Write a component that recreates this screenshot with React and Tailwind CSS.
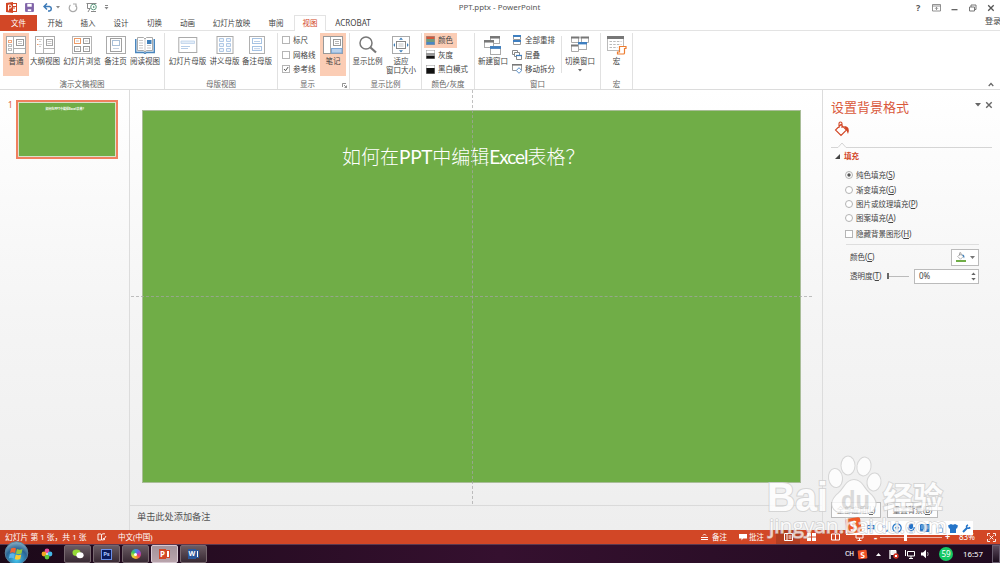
import React from "react";
import clsx from "clsx";

const TABS = [
  { label: "开始", width: "w-[36px]" },
  { label: "插入", width: "w-[30px]" },
  { label: "设计", width: "w-[36px]" },
  { label: "切换", width: "w-[31px]" },
  { label: "动画", width: "w-[35px]" },
  { label: "幻灯片放映", width: "w-[53px]" },
  { label: "审阅", width: "w-[36px]" },
];

const Icon = ({ w = 20, h = 18, className, children }) => (
  <svg width={w} height={h} viewBox={`0 0 ${w} ${h}`} fill="none" className={clsx("shrink-0", className)}>
    {children}
  </svg>
);

const NormalIcon = () => (
  <Icon>
    <rect x=".5" y=".5" width="19" height="17" fill="#fff" stroke="#a5a5a5" />
    <path d="M7.5 1v16M8 12.5h11" stroke="#b0b0b0" />
    <rect x="2.500" y="4.500" width="3" height="2" stroke="#f0a67c" />
    <rect x="2.500" y="8.500" width="3" height="2" stroke="#bbb" />
    <rect x="2.500" y="12.500" width="3" height="2" stroke="#bbb" />
    <rect x="10.500" y="3.500" width="7" height="6" stroke="#999" />
    <path d="M12 5.500h4M12 7.500h4" stroke="#aaa" strokeWidth=".7" />
  </Icon>
);

const OutlineIcon = () => (
  <Icon>
    <rect x=".5" y=".5" width="19" height="17" fill="#fff" stroke="#aaa" />
    <path d="M8.5 1v16M9 12.5h10" stroke="#b5b5b5" />
    <path d="M2 3.500h1.500M2 8.500h1.500" stroke="#ed9a66" />
    <path d="M4 3.500h3M4 5.500h2M4 8.500h3M4 10.500h2" stroke="#bbb" strokeWidth=".7" />
    <rect x="11.500" y="3.500" width="6" height="6" stroke="#a5a5a5" />
    <path d="M12.500 5.500h4M12.500 7.500h4" stroke="#aaa" strokeWidth=".7" />
  </Icon>
);

const SorterIcon = () => (
  <Icon>
    <rect x=".5" y=".5" width="19" height="17" fill="#fff" stroke="#b5b5b5" />
    <rect x="2.500" y="2.500" width="6" height="5" stroke="#ed9a66" />
    <rect x="11.500" y="2.500" width="6" height="5" stroke="#999" />
    <rect x="2.500" y="10.500" width="6" height="5" stroke="#999" />
    <rect x="11.500" y="10.500" width="6" height="5" stroke="#999" />
    <path d="M4 5h3M13 5h3M4 13h3M13 13h3" stroke="#aaa" strokeWidth=".7" />
  </Icon>
);

const NotesPageIcon = () => (
  <Icon>
    <rect x=".5" y=".5" width="19" height="17" fill="#fff" stroke="#aaa" />
    <rect x="4.500" y="2.500" width="11" height="13" stroke="#a0a0a0" />
    <rect x="6.500" y="4.500" width="7" height="5" stroke="#a9c0d8" />
    <path d="M7 12.500h6" stroke="#c5d3e2" />
  </Icon>
);

const ReadingIcon = () => (
  <Icon>
    <path d="M.7 3v13.500h7.800l1.500 1 1.500-1h7.800V3" fill="#dce9f5" stroke="#4a86bd" strokeWidth="1.400" />
    <path d="M2.500 1.500h6L10 3l1.500-1.500h6v13h-6L10 16l-1.500-1.500h-6z" fill="#fff" stroke="#aaa" />
    <path d="M10 3v12M4 4.500h4M4 7h4M4 9.500h4M4 12h4M12 9.500h4M12 12h4" stroke="#bbb" strokeWidth=".8" />
    <rect x="12" y="4" width="4.500" height="4" fill="#3f7fb9" />
  </Icon>
);

const SlideMasterIcon = () => (
  <Icon>
    <rect x=".8" y="1.500" width="18" height="15" fill="#fff" stroke="#aaa" />
    <path d="M3 5h13.500v2.500H3z" fill="#e3edf8" stroke="#bdd2ea" strokeWidth=".8" />
    <path d="M3 10.500h9M3 12.500h7" stroke="#b5cde8" />
  </Icon>
);

const HandoutIcon = () => (
  <Icon>
    <rect x="2" y=".5" width="16" height="17" fill="#fff" stroke="#aaa" />
    <path d="M4.500 2.500h4v3h-4zM11.500 2.500h4v3h-4zM4.500 7.500h4v3h-4zM11.500 7.500h4v3h-4zM4.500 12.500h4v3h-4zM11.500 12.500h4v3h-4z" fill="#eef4fb" stroke="#b0c9e6" />
  </Icon>
);

const NotesMasterIcon = () => (
  <Icon>
    <rect x="2.500" y=".5" width="15" height="17" fill="#fff" stroke="#b0b0b0" />
    <rect x="5.500" y="2.500" width="9" height="5" stroke="#a6c3e3" />
    <rect x="5.500" y="10.500" width="9" height="4" stroke="#a6c3e3" />
    <path d="M7 5.500h6M7 12.700h6" stroke="#a6c3e3" strokeWidth=".8" />
  </Icon>
);

const NotesIcon = () => (
  <Icon>
    <rect x=".5" y=".5" width="19" height="17" fill="#fff" stroke="#999" />
    <path d="M7.500 1v16" stroke="#aaa" />
    <rect x="10.500" y="3.500" width="7" height="6" stroke="#999" />
    <path d="M12 5.500h4M12 7.500h4" stroke="#999" strokeWidth=".7" />
    <rect x="8.500" y="12.500" width="10.500" height="4.500" fill="#b9d1ec" stroke="#7ea8d6" />
  </Icon>
);

const ZoomIcon = () => (
  <Icon>
    <circle cx="8" cy="7" r="6" stroke="#777" strokeWidth="1.500" />
    <path d="M12.500 11.500l5.500 5" stroke="#777" strokeWidth="2.200" />
  </Icon>
);

const FitIcon = () => (
  <Icon>
    <rect x="1.500" y=".5" width="17" height="17" fill="#fff" stroke="#aaa" />
    <rect x="5.500" y="5.500" width="9" height="7" stroke="#888" />
    <path d="M7.500 8h5M7.500 10h5" stroke="#aaa" strokeWidth=".7" />
    <path d="M10 1.500l2 2.300H8zM10 16.500l2-2.300H8zM2.300 9l1.700-2v4zM17.700 9L16 7v4z" fill="#3f7fb9" />
  </Icon>
);

const NewWindowIcon = () => (
  <Icon h={19}>
    <rect x="7.500" y=".5" width="9" height="7" fill="#fff" stroke="#aaa" />
    <path d="M7 1.300h10" stroke="#777" strokeWidth="2.500" />
    <rect x="1.500" y="4.500" width="9" height="7" fill="#fff" stroke="#aaa" />
    <path d="M1 5.300h10" stroke="#777" strokeWidth="2.500" />
    <rect x="7.500" y="10.500" width="10" height="8" fill="#fff" stroke="#aaa" />
    <path d="M7 11.500h11" stroke="#3f7fc0" strokeWidth="2.800" />
  </Icon>
);

const SwitchIcon = () => (
  <Icon>
    <path d="M1.500 1.500h7v5h-7zM11.500 1.500h7v5h-7zM1.500 9.500h7v6h-7z" fill="#fff" stroke="#aaa" />
    <path d="M1 1.500h8.500M10.500 1.500h8.500M1 9.500h7" stroke="#777" strokeWidth="2.200" />
    <rect x="8.500" y="6.500" width="8" height="7" fill="#fff" stroke="#aaa" />
    <path d="M8 7.200h9" stroke="#3f7fc0" strokeWidth="2.400" />
  </Icon>
);

const MacroIcon = () => (
  <Icon h={19}>
    <rect x=".5" y=".5" width="16" height="14" fill="#fff" stroke="#bbb" />
    <path d="M0 1.500h17" stroke="#777" strokeWidth="3" />
    <path d="M2.500 5.500h12M2.500 8.500h12M2.500 11.500h8" stroke="#bbb" strokeDasharray="2.500 1.200" />
    <path d="M12.500 10.500h6.500v2h-1.500v4.500q0 1-1 1h-6v-2h2z" fill="#fff" stroke="#ed7d31" strokeWidth="1.200" />
  </Icon>
);

const ArrangeIcon = () => (
  <Icon w={10} h={10}>
    <path d="M1.500 1h7v3.500h-7zM1.500 5.500h7V9.500h-7z" fill="#fff" stroke="#999" />
    <path d="M1 1h8M1 6h8" stroke="#3f7fc0" strokeWidth="1.800" />
  </Icon>
);

const CascadeIcon = () => (
  <Icon w={10} h={10}>
    <path d="M.5.5h5v4h-5z" fill="#fff" stroke="#888" />
    <path d="M2.500 2.500h5v4h-5z" fill="#fff" stroke="#888" />
    <path d="M4.500 5.500h5v4h-5z" fill="#fff" stroke="#888" />
    <path d="M4 5.500h6" stroke="#3f7fc0" strokeWidth="1.300" />
  </Icon>
);

const SplitIcon = () => (
  <Icon w={10} h={10}>
    <path d="M.5.5h9v6h-9z" fill="#fff" stroke="#999" />
    <path d="M0 .8h10" stroke="#777" strokeWidth="1.600" />
    <path d="M7 3.700L9.700 6.500 7 9.300 4.300 6.500z" fill="#fff" stroke="#5c92cb" />
  </Icon>
);

const PaletteIcon = ({ colors }) => (
  <Icon w={9} h={9}>
    {colors.map((c, i) => (
      <rect key={i} x="0" y={i * 3} width="9" height="3" fill={c} />
    ))}
    <rect x=".25" y=".25" width="8.500" height="8.500" stroke="#999" strokeWidth=".5" />
  </Icon>
);

const BigButton = ({ icon, label, width, active, children }) => (
  <div
    className={clsx(
      "flex h-[43px] shrink-0 flex-col items-center pt-[3px]",
      width,
      active && "bg-[#fbcdb5]"
    )}
  >
    <div className="h-[19px]">{icon}</div>
    <span className="mt-[2px] text-center leading-[9px] whitespace-nowrap">{label}</span>
    {children}
  </div>
);

const SmallRow = ({ icon, label, active, className }) => (
  <div className={clsx("flex h-[14.500px] items-center gap-[3px] whitespace-nowrap", active && "bg-[#fbcdb5]", className)}>
    {icon}
    <span>{label}</span>
  </div>
);

const Group = ({ title, width, pad, launcher, children }) => (
  <div className={clsx("flex shrink-0 flex-col border-r border-[#e1e1e1]", width)}>
    <div className={clsx("flex h-[46px]", pad)}>{children}</div>
    <div className="relative flex h-[10px] items-center justify-center text-[#666]">
      {title}
      {launcher && (
        <svg className="absolute right-[2px] bottom-[1px]" width="5" height="5" viewBox="0 0 5 5" fill="none" stroke="#777">
          <path d="M.5 4V.5H4M2 2l2.500 2.500M4.500 2.500v2h-2" strokeWidth=".8" />
        </svg>
      )}
    </div>
  </div>
);

const Check = ({ on }) => (
  <svg width="8" height="8" viewBox="0 0 8 8" fill="#fff" className="shrink-0">
    <rect x=".5" y=".5" width="7" height="7" stroke="#b5b5b5" />
    {on && <path d="M2 4l1.500 1.700L6.200 2" fill="none" stroke="#555" />}
  </svg>
);

const TitleBar = () => (
  <div className="flex h-[15px] shrink-0 items-center text-[#555]">
    <div className="flex w-[330px] items-center pl-[6px]">
      <svg width="11" height="11" viewBox="0 0 11 11">
        <rect x="5" y="1.500" width="5.500" height="8" fill="#fff" stroke="#d24726" />
        <path d="M8 4v3M7 4.500h3" stroke="#d24726" />
        <path d="M0 1l7-1v11l-7-1z" fill="#d24726" />
        <path d="M2.500 8.500V3h1.500a1.300 1.300 0 010 3H2.500" fill="none" stroke="#fff" />
      </svg>
      <svg className="ml-[8px]" width="9" height="9" viewBox="0 0 9 9" fill="none" stroke="#8064a8">
        <path d="M.6.6h7.800v7.800H.6z" fill="#8064a8" />
        <path d="M2 .5h5v3.500H2zM2.500 6h4v2.500h-4z" fill="#fff" strokeWidth=".6" />
      </svg>
      <svg className="ml-[9px]" width="10" height="9" viewBox="0 0 10 9" fill="none" stroke="#3c7ab8" strokeWidth="1.500">
        <path d="M1 3.500h5.500a2.300 2.300 0 010 4.500H5M4 .5l-3 3 3 3" />
      </svg>
      <svg className="ml-[3px]" width="4" height="3" viewBox="0 0 4 3"><path d="M0 0h4L2 2.500z" fill="#888" /></svg>
      <svg className="ml-[8px]" width="10" height="10" viewBox="0 0 10 10" fill="none" stroke="#aaa" strokeWidth="1.200">
        <path d="M2.500 2a3.800 3.800 0 105 0M5 1h3v3" />
      </svg>
      <svg className="ml-[8px]" width="12" height="11" viewBox="0 0 12 11" fill="none" stroke="#888">
        <path d="M.5 1.500h10M1.500 1.500v5h3M4 6.500L2 10M5 9.500h5" />
        <circle cx="7.500" cy="5" r="2.800" fill="#fff" stroke="#5d9b80" />
        <path d="M7 3.700v2.600L9 5z" fill="#5d9b80" stroke="none" />
      </svg>
      <svg className="ml-[6px]" width="5" height="5" viewBox="0 0 5 5"><path d="M1 0h3v1H1zM.500 2h4l-2 2.500z" fill="#888" /></svg>
    </div>
    <div className="-mt-[1px] w-[339px] text-center text-[7.900px]">PPT.pptx - PowerPoint</div>
    <div className="flex flex-1 items-center justify-end gap-[10px] pr-[5px]">
      <span className="w-[6px] text-[9px] font-bold">?</span>
      <svg width="9" height="8" viewBox="0 0 9 8" fill="none" stroke="#777">
        <path d="M.5.5h8v6.500h-8zM.5 2h8M4.500 6V3.500M3 4.800l1.500-1.500L6 4.800" strokeWidth=".8" />
      </svg>
      <svg width="7" height="8" viewBox="0 0 7 8"><path d="M.5 5h6v1.300h-6z" fill="#666" /></svg>
      <svg className="ml-[1px]" width="8" height="8" viewBox="0 0 8 8" fill="#fff" stroke="#777">
        <path d="M2 1h5v4.500H2z" /><path d="M.5 3h5v4h-5z" />
      </svg>
      <svg width="8" height="8" viewBox="0 0 8 8" stroke="#555" strokeWidth="1.300"><path d="M1.200 1.200l5.500 5.500M6.700 1.200L1.200 6.700" /></svg>
    </div>
  </div>
);

const TabBar = () => (
  <div className="flex h-[16px] shrink-0 border-b border-[#e3e3e3] text-[#444]">
    <div className="flex h-[16px] w-[37px] items-center justify-center bg-[#d24726] text-white">文件</div>
    {TABS.map((t) => (
      <div key={t.label} className={clsx("flex h-[15px] shrink-0 items-center justify-center whitespace-nowrap", t.width)}>
        {t.label}
      </div>
    ))}
    <div className="-mb-px flex h-[16px] w-[32px] shrink-0 items-center justify-center border-x border-t border-[#e3e3e3] bg-white pb-px text-[#d24726]">
      视图
    </div>
    <div className="flex h-[15px] w-[54px] items-center justify-center text-[8px]">ACROBAT</div>
    <div className="-mt-[3px] ml-auto w-[15px] text-[8px] leading-[18px] whitespace-nowrap">登录</div>
  </div>
);

const Ribbon = () => (
  <div className="flex h-[59px] shrink-0 border-b border-[#dcdcdc] bg-white pt-[2px] text-[#444]">
    <Group title="演示文稿视图" width="w-[165px]" pad="pl-[3px]">
      <BigButton icon={<NormalIcon />} label="普通" width="w-[26px]" active />
      <BigButton icon={<OutlineIcon />} label="大纲视图" width="w-[32px]" />
      <BigButton icon={<SorterIcon />} label="幻灯片浏览" width="w-[42px]" />
      <BigButton icon={<NotesPageIcon />} label="备注页" width="w-[25px]" />
      <BigButton icon={<ReadingIcon />} label="阅读视图" width="w-[34px]" />
    </Group>
    <Group title="母版视图" width="w-[113px]" pad="pl-[2px]">
      <BigButton icon={<SlideMasterIcon />} label="幻灯片母版" width="w-[41px]" />
      <BigButton icon={<HandoutIcon />} label="讲义母版" width="w-[33px]" />
      <BigButton icon={<NotesMasterIcon />} label="备注母版" width="w-[32px]" />
    </Group>
    <Group title={<span className="mr-[12px]">显示</span>} width="w-[72px]" pad="pl-[4px]" launcher>
      <div className="w-[38px]">
        <SmallRow icon={<Check />} label="标尺" />
        <SmallRow icon={<Check />} label="网格线" />
        <SmallRow icon={<Check on />} label="参考线" />
      </div>
      <BigButton icon={<NotesIcon />} label="笔记" width="w-[26px]" active />
    </Group>
    <Group title="显示比例" width="w-[72px]">
      <BigButton icon={<ZoomIcon />} label="显示比例" width="w-[35px]" />
      <BigButton icon={<FitIcon />} label={<>适应<br />窗口大小</>} width="w-[32px]" />
    </Group>
    <Group title="颜色/灰度" width="w-[53px]" pad="pl-[2px]">
      <div className="flex flex-col items-start">
        <SmallRow icon={<PaletteIcon colors={["#d2573a", "#6f9a7c", "#4a86c5"]} />} label="颜色" active className="w-[33px] pl-[2px]" />
        <SmallRow icon={<PaletteIcon colors={["#fff", "#999", "#111"]} />} label="灰度" className="pl-[2px]" />
        <SmallRow icon={<PaletteIcon colors={["#fff", "#111", "#111"]} />} label="黑白模式" className="pl-[2px]" />
      </div>
    </Group>
    <Group title="窗口" width="w-[126px]" pad="pl-[2px]">
      <BigButton icon={<NewWindowIcon />} label="新建窗口" width="w-[32px]" />
      <div className="ml-[3px] w-[49px] shrink-0">
        <SmallRow icon={<ArrangeIcon />} label="全部重排" className="gap-[2px]" />
        <SmallRow icon={<CascadeIcon />} label="层叠" className="gap-[2px]" />
        <SmallRow icon={<SplitIcon />} label="移动拆分" className="gap-[2px]" />
      </div>
      <div className="mt-[3px] mr-[2px] h-[37px] w-px bg-[#e1e1e1]" />
      <BigButton icon={<SwitchIcon />} label="切换窗口" width="w-[32px]">
        <svg className="mt-[3px]" width="4" height="3" viewBox="0 0 4 3"><path d="M0 0h4L2 2.500z" fill="#666" /></svg>
      </BigButton>
    </Group>
    <Group title="宏" width="w-[32px]">
      <BigButton icon={<MacroIcon />} label="宏" width="w-[31px]" />
    </Group>
    <svg className="mt-auto mr-[6px] mb-[2px] ml-auto" width="6" height="5" viewBox="0 0 6 5" fill="none" stroke="#666" strokeWidth="1.200">
      <path d="M.7 4L3 1.500 5.300 4" />
    </svg>
  </div>
);

const SlideTitle = () => (
  <>
    如何在<span className="font-normal tracking-[-0.300px]">PPT</span>中编辑
    <span className="font-normal tracking-[-1px]">Excel</span>表格？
  </>
);

const Thumbnails = () => (
  <div className="flex w-[130px] shrink-0 border-r border-[#dcdcdc] pt-[10px]">
    <div className="w-[16px] pr-[3px] text-right text-[9px] leading-[10px] text-[#e0694a]">1</div>
    <div className="h-[59px] w-[102px] border-2 border-[#f0805f] bg-[#d9e3cc] p-px">
      <div className="h-full bg-[#70ad47] pt-[3px] text-center text-[3px] leading-[6px] font-bold text-white">
        <span className="mr-[3px]">如何在PPT中编辑Excel表格？</span>
      </div>
    </div>
  </div>
);

const Editor = () => (
  <div className="flex w-[692px] shrink-0 flex-col">
    <div className="relative flex h-[414px] shrink-0 pt-[20px] pl-[12px]">
      <div className="h-[373px] w-[659px] border border-[#a9bd98] bg-[#70ad47] pt-[32px]">
        <div className="pl-[199px] font-[Lato,'Noto_Sans_CJK_SC',sans-serif] text-[19px] leading-[28px] font-light whitespace-nowrap text-white">
          <SlideTitle />
        </div>
      </div>
      <div className="absolute top-0 left-[342px] h-[414px] border-l border-dashed border-[#a5a5a5]/70" />
      <div className="absolute top-[206px] left-px w-[681px] border-t border-dashed border-[#a5a5a5]/70" />
    </div>
    <div className="mt-[1px] flex-1 border-t border-[#dadada] pt-[4px] pl-[7px] text-[9.200px] leading-[13px] text-[#555]">
      单击此处添加备注
    </div>
  </div>
);

const Radio = ({ on, label, k }) => (
  <div className="flex h-[14.400px] items-center gap-[3px]">
    <svg width="8" height="8" viewBox="0 0 8 8" fill="#fff">
      <circle cx="4" cy="4" r="3.500" stroke="#aaa" strokeWidth=".9" />
      {on && <circle cx="4" cy="4" r="1.700" fill="#555" />}
    </svg>
    <Label text={label} k={k} />
  </div>
);

const Label = ({ text, k }) => (
  <span className="whitespace-nowrap">
    {text}
    <span className="text-[8px] tracking-[-0.200px]">(<u>{k}</u>)</span>
  </span>
);

const BucketIcon = ({ size = 16, color = "#d24726", spill = color }) => (
  <svg width={size} height={size} viewBox="0 0 16 16" fill="none" stroke={color} strokeWidth="1.100">
    <path d="M7 3.500L1.500 9 7 14.500 12.500 9zM5 7V2.500q0-1.500 1.500-1.500T8 2.500V7" />
    <path d="M10 5q3.500 0 4.500 2.500T14 13q-1-3-2.500-5z" fill={spill} stroke="none" />
  </svg>
);

const FormatPane = () => (
  <div className="flex flex-1 flex-col border-l border-[#dcdcdc] pr-[8px] pl-[8px] text-[#444]">
    <div className="flex h-[30px] items-center">
      <span className="mt-[3px] text-[13px] leading-[20px] text-[#d9583b]">设置背景格式</span>
      <svg className="ml-auto" width="6" height="4" viewBox="0 0 6 4"><path d="M0 0h6L3 3.500z" fill="#666" /></svg>
      <svg className="mr-[-1px] ml-[4px]" width="8" height="8" viewBox="0 0 8 8" stroke="#666" strokeWidth="1.400"><path d="M1.200 1.200l5.500 5.500M6.700 1.200L1.200 6.700" /></svg>
    </div>
    <div className="mt-[1px] ml-[3px] h-[16px]"><BucketIcon /></div>
    <svg className="mt-[5px]" width="161" height="7" viewBox="0 0 161 7" fill="none" stroke="#d5d5d5">
      <path d="M0 5.500h7l4-4.500 4 4.500h146" />
    </svg>
    <div className="mt-[2px] flex items-center gap-[4px] pl-[4px] leading-[11px] font-bold text-[#d24726]">
      <svg width="5" height="5" viewBox="0 0 5 5"><path d="M5 0v5H0z" fill="#444" /></svg>
      填充
    </div>
    <div className="mt-[6px] pl-[14px]">
      <Radio on label="纯色填充" k="S" />
      <Radio label="渐变填充" k="G" />
      <Radio label="图片或纹理填充" k="P" />
      <Radio label="图案填充" k="A" />
      <div className="mt-[1px] flex h-[14px] items-center gap-[3px]">
        <Check />
        <Label text="隐藏背景图形" k="H" />
      </div>
    </div>
    <div className="mt-[3px] mr-[13px] ml-[15px] border-t border-[#dedede]" />
    <div className="mt-[4px] mr-[13px] flex h-[17px] items-center pl-[19px]">
      <Label text="颜色" k="C" />
      <div className="ml-auto flex h-[17px] w-[28px] items-center justify-center gap-[4px] border border-[#bbb] bg-white">
        <div className="flex flex-col items-center">
          <BucketIcon size={8} color="#777" spill="#3f7fb9" />
          <div className="h-[2px] w-[10px] bg-[#70ad47]" />
        </div>
        <svg width="5" height="3" viewBox="0 0 5 3"><path d="M0 0h5L2.500 3z" fill="#777" /></svg>
      </div>
    </div>
    <div className="mt-[3px] mr-[13px] flex h-[15px] items-center pl-[19px]">
      <Label text="透明度" k="T" />
      <div className="ml-[6px] flex items-center">
        <div className="h-[6px] w-[1.500px] bg-[#666]" />
        <div className="h-px w-[20px] bg-[#bbb]" />
      </div>
      <div className="ml-auto flex h-[15px] w-[65px] items-center justify-between border border-[#bbb] bg-white pr-[2px] pl-[4px]">
        <span className="text-[8px]">0%</span>
        <svg width="5" height="9" viewBox="0 0 5 9" fill="#666"><path d="M.3 3h4.400L2.500.500zM.3 6h4.400L2.500 8.500z" /></svg>
      </div>
    </div>
    <div className="mt-auto mb-[12px] flex gap-[6px] text-[#666]">
      <div className="flex h-[16px] w-[50px] items-center justify-center border border-[#bbb] bg-[#fdfdfd]"><Label text="全部应用" k="L" /></div>
      <div className="flex h-[16px] w-[51px] items-center justify-center border border-[#bbb] bg-[#fdfdfd]"><Label text="重置背景" k="B" /></div>
    </div>
  </div>
);

const StatusBar = () => (
  <div className="flex h-[14px] shrink-0 items-center bg-[#d24726] text-white">
    <span className="w-[97px] pl-[5px] text-[7.800px] whitespace-nowrap">幻灯片 第 1 张，共 1 张</span>
    <svg width="10" height="8" viewBox="0 0 10 8" fill="none" stroke="#fff" strokeWidth=".9">
      <path d="M4.500 1.500v5.500H1V1h3zM4.500 1.500L6 .8h2M5 7l3-.5M6 5l1 1.200L9 3" />
    </svg>
    <span className="ml-[11px]">中文(中国)</span>
    <div className="ml-auto flex h-full items-center">
      <svg width="8" height="8" viewBox="0 0 8 8" fill="none" stroke="#fff"><path d="M0 4.500h7M0 6.500h7M2 2.500L3.500 1 5 2.500" /></svg>
      <span className="ml-[3px] w-[27px]">备注</span>
      <svg width="8" height="8" viewBox="0 0 8 8" fill="#fff"><path d="M0 1h8v4.500H4L2.500 7.500v-2H0z" /></svg>
      <span className="ml-[2px] w-[27px]">批注</span>
      <div className="flex h-full w-[24px] items-center justify-center bg-[#b23e22]">
        <svg width="9" height="8" viewBox="0 0 9 8" fill="none" stroke="#fff"><path d="M.5.5h8v7h-8zM3 .5v7M4.500 3h3M4.500 5h3" /></svg>
      </div>
      <svg className="ml-[7px]" width="9" height="8" viewBox="0 0 9 8" fill="#fff"><path d="M0 0h4v3.500H0zM5 0h4v3.500H5zM0 4.500h4V8H0zM5 4.500h4V8H5z" /></svg>
      <svg className="ml-[15px]" width="9" height="8" viewBox="0 0 9 8" fill="none" stroke="#fff"><path d="M.5 1h3.500l.5.500.5-.500h3.500v6H.5zM4.500 1v6" /></svg>
      <svg className="ml-[15px]" width="9" height="8" viewBox="0 0 9 8" fill="none" stroke="#fff"><path d="M0 .5h9M1 .5V5h7V.5M4.500 5v2.500M2.500 7.500h4" /></svg>
      <span className="ml-[10px] w-[6px] text-[10px] font-bold">-</span>
      <div className="flex h-px w-[62px] items-center justify-start bg-white/60 pl-[24px]">
        <div className="h-[8px] w-[3px] bg-white" />
      </div>
      <span className="ml-[3px] w-[14px] text-[9px] font-bold">+</span>
      <span className="w-[28px] text-[8px]">83%</span>
      <svg className="mr-[4px]" width="9" height="9" viewBox="0 0 9 9" fill="none" stroke="#fff">
        <path d="M.5 3V.500H3M6 .500h2.500V3M8.500 6v2.500H6M3 8.500H.500V6M2.500 2.500l4 4M6.500 2.500l-4 4" strokeWidth=".9" />
      </svg>
    </div>
  </div>
);

const TaskButton = ({ bright, children }) => (
  <div
    className={clsx(
      "flex h-[18px] w-[27px] items-center justify-center rounded-[2px] border bg-linear-to-b",
      bright ? "border-[#d8c9d2] from-[#a3939b] to-[#b9a4ac]" : "border-[#77686f] from-[#6a5b63] to-[#392a34]"
    )}
  >
    {children}
  </div>
);

const Taskbar = () => (
  <div className="flex h-[19px] shrink-0 items-center border-t border-[#5b3a50] bg-linear-to-r from-[#1c0919] via-[#35102f] to-[#200b1f] text-white">
    <svg className="-mt-[2px] ml-[4px]" width="25" height="24" viewBox="0 0 25 24">
      <defs>
        <radialGradient id="orb" cx=".5" cy=".8" r=".8">
          <stop offset="0" stopColor="#43c5ee" />
          <stop offset=".6" stopColor="#2a6495" />
          <stop offset="1" stopColor="#8bb2c6" />
        </radialGradient>
      </defs>
      <circle cx="12.500" cy="12" r="11.300" fill="url(#orb)" stroke="#55829d" />
      <path d="M7 7.500q3-1.500 5 0l-1 4.500q-2.500-1.300-5 0z" fill="#ee6432" />
      <path d="M13 8q2.500 1.500 5.500 0l-1 4.500q-3 1.200-5.500 0z" fill="#97c93d" />
      <path d="M5.800 13q2.500-1.500 5 0l-1 4.500q-2.500-1.500-5 0z" fill="#5bb4ea" />
      <path d="M11.800 13.500q2.500 1.500 5.500 0l-1 4.500q-3 1.300-5.500 0z" fill="#fccb2e" />
    </svg>
    <svg className="ml-[12px]" width="12" height="12" viewBox="0 0 12 12">
      <circle cx="6" cy="3" r="2.400" fill="#e84b9a" />
      <circle cx="3" cy="6" r="2.400" fill="#f5a623" />
      <circle cx="9" cy="6" r="2.400" fill="#45b8e8" />
      <circle cx="6" cy="9" r="2.400" fill="#5dc93c" />
      <circle cx="6" cy="6" r="1" fill="#fff" />
    </svg>
    <div className="ml-[11px] flex gap-[2px]">
      <TaskButton>
        <svg width="12" height="10" viewBox="0 0 12 10">
          <ellipse cx="4.500" cy="3.800" rx="4" ry="3.300" fill="#94d936" />
          <ellipse cx="8" cy="6.200" rx="3.600" ry="3" fill="#fff" />
        </svg>
      </TaskButton>
      <TaskButton>
        <div className="flex h-[11px] w-[11px] items-center justify-center border border-[#6b8fe8] bg-[#0a1a5c] text-[6px] font-bold text-[#a9c3ff]">Ps</div>
      </TaskButton>
      <TaskButton>
        <div className="h-[10px] w-[10px] rounded-full bg-[conic-gradient(#3c8be8,#8a4be0,#e93b6f,#f5a623,#d8e03c,#3cc65b,#3c8be8)] p-[3.500px]">
          <div className="h-full w-full rounded-full bg-white" />
        </div>
      </TaskButton>
      <TaskButton bright>
        <div className="flex h-[10px] items-center">
          <div className="flex h-[10px] w-[7px] items-center justify-center bg-[#d24726] text-[8px] font-bold">P</div>
          <div className="h-[8px] w-[4px] border border-[#d24726] bg-white" />
        </div>
      </TaskButton>
      <TaskButton>
        <div className="flex h-[10px] items-center">
          <div className="flex h-[10px] w-[8px] items-center justify-center bg-[#2b579a] text-[7px] font-bold">W</div>
          <div className="h-[8px] w-[3px] border border-[#2b579a] bg-white" />
        </div>
      </TaskButton>
    </div>
    <div className="ml-auto flex h-full items-center">
      <span className="w-[13px] font-['Liberation_Mono',monospace] text-[8px] tracking-[-0.500px]">CH</span>
      <div className="flex h-[9px] w-[9px] -rotate-6 items-center justify-center rounded-[1px] bg-[#ef5124] text-[8px] font-bold">S</div>
      <svg className="ml-[9px]" width="5" height="3" viewBox="0 0 5 3"><path d="M0 3h5L2.500 0z" fill="#fff" /></svg>
      <svg className="ml-[8px]" width="10" height="10" viewBox="0 0 10 10" fill="none" stroke="#fff">
        <path d="M1 1v9" strokeWidth="1.300" /><path d="M2 1.500h5v4H2z" fill="#eee" />
        <circle cx="7" cy="7" r="2.700" fill="#d33324" stroke="none" /><path d="M6 6l2 2M8 6L6 8" />
      </svg>
      <svg className="ml-[6px]" width="10" height="9" viewBox="0 0 10 9" fill="none" stroke="#fff">
        <path d="M2.500 1.500h7v4.500h-7zM6 6v2M4 8.500h4M.5 0v6" />
      </svg>
      <svg className="ml-[6px]" width="10" height="10" viewBox="0 0 10 10" fill="#fff">
        <path d="M0 3.500h2L5 .8v8.400L2 6.500H0z" /><path d="M6.500 3q1.300 2 0 4" fill="none" stroke="#ccc" strokeWidth=".8" />
      </svg>
      <div className="ml-[8px] flex h-[14px] w-[14px] items-center justify-center rounded-full bg-[#16c864] text-[8px]">59</div>
      <span className="ml-[10px] w-[29px] text-[7.800px]">16:57</span>
      <div className="h-[18px] w-[8px] border border-[#6b5f70] bg-linear-to-b from-[#5c4b5d] to-[#1c0d1c]" />
    </div>
  </div>
);

// Sogou input method bar floating above the status bar
const ImeBar = () => (
  <div className="absolute top-[521px] left-[846px] flex h-[14px] w-[127px] items-center bg-white font-bold text-[#2474c8]">
    <div className="-mt-[5px] flex h-[15px] w-[15px] shrink-0 -rotate-8 items-center justify-center rounded-[2px] bg-[#f05a28] text-[14px] text-white">S</div>
    <span className="ml-[5px] w-[16px] text-[9px]">中</span>
    <span className="w-[10px] text-[9px]">°,</span>
    <svg width="10" height="10" viewBox="0 0 10 10" fill="none" stroke="#2474c8" strokeWidth="1.200">
      <circle cx="5" cy="5" r="4.200" /><path d="M5 2.500v5M3.500 4v1.500M6.500 4v1.500" />
    </svg>
    <svg className="ml-[5px]" width="8" height="10" viewBox="0 0 8 10" fill="none" stroke="#2474c8" strokeWidth="1.200">
      <rect x="2.500" y=".6" width="3" height="5" rx="1.500" fill="#2474c8" /><path d="M.8 4q0 3.500 3.200 3.500T7.200 4M4 7.500v2M2 9.400h4" />
    </svg>
    <svg className="ml-[5px]" width="10" height="8" viewBox="0 0 10 8" fill="#2474c8"><rect width="10" height="8" rx="1" /><path d="M1.500 2h7M1.500 4h7M3 6h4" stroke="#fff" strokeDasharray="1 1" /></svg>
    <svg className="ml-[6px] opacity-50" width="7" height="9" viewBox="0 0 7 9" fill="none" stroke="#2474c8"><path d="M.5 4h6v4.500h-6zM2 4V2q0-1.500 1.500-1.500T5 2v2" /></svg>
    <svg className="ml-[5px]" width="10" height="9" viewBox="0 0 10 9" fill="#2474c8"><path d="M0 1.500L3 0q2 1.500 4 0l3 1.500L9 4.500H8V9H2V4.500H1z" /></svg>
    <svg className="ml-[4px]" width="9" height="9" viewBox="0 0 9 9" fill="none" stroke="#2474c8" strokeWidth="2"><path d="M1 8l4-4" /><path d="M6 .8q-2 1-1.300 2.700T8.300 3.500" strokeWidth="1.500" /></svg>
  </div>
);

const Watermark = () => (
  <svg className="pointer-events-none absolute top-[450px] left-[762px]" width="200" height="94" viewBox="0 0 200 94">
    <g fill="#fff" stroke="#d0d0d0" strokeWidth="2" opacity=".82" paintOrder="stroke" fontFamily="Liberation Sans, sans-serif">
      <text x="5" y="61" fontSize="40" fontWeight="bold" textLength="61" lengthAdjust="spacingAndGlyphs">Bai</text>
      <ellipse cx="73.500" cy="28" rx="6.500" ry="9" transform="rotate(-8 73.500 28)" />
      <ellipse cx="86" cy="15.500" rx="6.500" ry="9" />
      <ellipse cx="102" cy="16.500" rx="6.500" ry="9" transform="rotate(10 102 16.500)" />
      <ellipse cx="112" cy="32" rx="6.500" ry="8.500" transform="rotate(8 112 32)" />
      <path d="M92 30c-8 0-10 9-15 13-6 5-9 10-5 16 5 6 12 3 20 3s15 3 19-2c5-6 2-12-4-17-5-4-7-13-15-13z" />
      <text x="79" y="59" fontSize="26" fontWeight="bold" fill="#d6d6d6" stroke="#fff" strokeWidth="1" textLength="29" lengthAdjust="spacingAndGlyphs">du</text>
      <text x="121" y="58" fontSize="30" fontWeight="bold" fontFamily="Noto Sans CJK SC, sans-serif">经验</text>
    </g>
    <text x="7" y="83" fontSize="20" fill="#fff" stroke="#c8c8c8" strokeWidth="1.400" opacity=".75" paintOrder="stroke" fontFamily="Open Sans, sans-serif" textLength="178" lengthAdjust="spacingAndGlyphs">jingyan.baidu.com</text>
  </svg>
);

const App = () => {
  return (
    <div className="relative flex h-[563px] w-[1000px] flex-col overflow-hidden bg-white font-['Noto_Sans','Noto_Sans_CJK_SC',sans-serif] text-[7.500px] leading-[10px]">
      <TitleBar />
      <TabBar />
      <Ribbon />
      <div className="flex h-[440px] shrink-0 bg-linear-to-b from-white via-[#f5f5f5] to-[#eeeeee]">
        <Thumbnails />
        <Editor />
        <FormatPane />
      </div>
      <StatusBar />
      <Taskbar />
      <ImeBar />
      <Watermark />
    </div>
  );
};

export default App;
